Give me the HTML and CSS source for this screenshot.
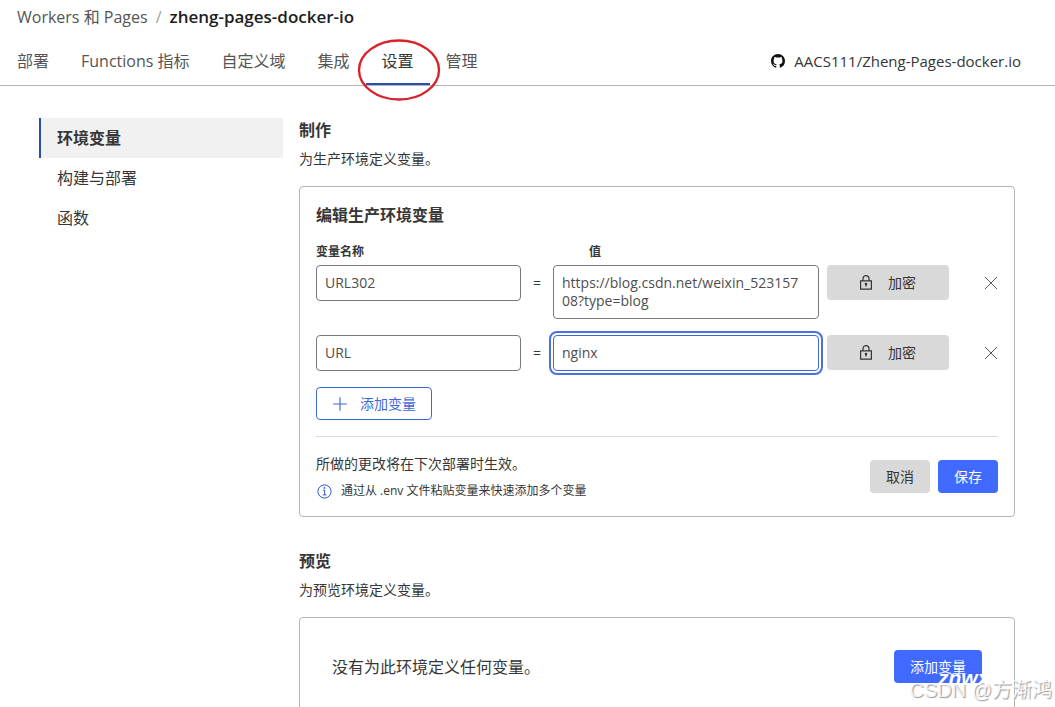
FILE: index.html
```html
<!DOCTYPE html>
<html lang="zh-CN">
<head>
<meta charset="utf-8">
<meta name="viewport" content="width=device-width, initial-scale=1">
<title>zheng-pages-docker-io</title>
<link rel="stylesheet" href="styles.css">
</head>
<body>
<header class="page-header">
  <div class="breadcrumb"><a href="#">Workers 和 Pages</a><span class="slash">/</span><strong>zheng-pages-docker-io</strong></div>
  <div class="header-row">
    <nav class="tabs">
      <a class="tab" href="#">部署</a>
      <a class="tab" href="#">Functions 指标</a>
      <a class="tab" href="#">自定义域</a>
      <a class="tab" href="#">集成</a>
      <a class="tab active" href="#">设置<svg class="circle" viewBox="0 0 84 64" aria-hidden="true"><ellipse cx="42" cy="32" rx="40" ry="29.5"/></svg></a>
      <a class="tab" href="#">管理</a>
    </nav>
    <a class="repo" href="#">
      <svg class="github" viewBox="0 0 16 16" aria-hidden="true"><path d="M8 0C3.58 0 0 3.58 0 8c0 3.54 2.29 6.53 5.47 7.59.4.07.55-.17.55-.38 0-.19-.01-.82-.01-1.49-2.01.37-2.53-.49-2.69-.94-.09-.23-.48-.94-.82-1.13-.28-.15-.68-.52-.01-.53.63-.01 1.08.58 1.23.82.72 1.21 1.87.87 2.33.66.07-.52.28-.87.51-1.07-1.78-.2-3.64-.89-3.64-3.95 0-.87.31-1.59.82-2.15-.08-.2-.36-1.02.08-2.12 0 0 .67-.21 2.2.82a7.6 7.6 0 0 1 4 0c1.53-1.04 2.2-.82 2.2-.82.44 1.1.16 1.92.08 2.12.51.56.82 1.27.82 2.15 0 3.07-1.87 3.75-3.65 3.95.29.25.54.73.54 1.48 0 1.07-.01 1.93-.01 2.2 0 .21.15.46.55.38A8 8 0 0 0 16 8c0-4.42-3.58-8-8-8z"/></svg>
      AACS111/Zheng-Pages-docker.io
    </a>
  </div>
</header>
<div class="layout">
  <nav class="sidebar">
    <a class="side-link current" href="#">环境变量</a>
    <a class="side-link" href="#">构建与部署</a>
    <a class="side-link" href="#">函数</a>
  </nav>
  <main class="content">
    <section class="section">
      <h2>制作</h2>
      <p class="lead">为生产环境定义变量。</p>
      <form class="card editor">
        <h3>编辑生产环境变量</h3>
        <div class="var-row labels"><span id="name-label">变量名称</span><span></span><span id="value-label" class="value-label">值</span></div>
        <div class="var-row">
          <input class="field" type="text" value="URL302" aria-labelledby="name-label">
          <span class="equals">=</span>
          <textarea class="field" rows="2" aria-labelledby="value-label">https://blog.csdn.net/weixin_52315708?type=blog</textarea>
          <button class="btn encrypt" type="button"><svg class="lock" viewBox="0 0 12 15" aria-hidden="true"><path d="M.6 5.9h10.8v8.2H.6zM3 5.9V3.6a3 3 0 0 1 6 0v2.3"/><path d="M6 8.4v3"/><circle cx="6" cy="9" r=".7"/></svg>加密</button>
          <button class="remove" type="button" aria-label="删除"><svg viewBox="0 0 14 14" aria-hidden="true"><path d="M1 1l12 12M13 1L1 13"/></svg></button>
        </div>
        <div class="var-row">
          <input class="field" type="text" value="URL" aria-labelledby="name-label">
          <span class="equals">=</span>
          <textarea class="field focused" rows="1" aria-labelledby="value-label">nginx</textarea>
          <button class="btn encrypt" type="button"><svg class="lock" viewBox="0 0 12 15" aria-hidden="true"><path d="M.6 5.9h10.8v8.2H.6zM3 5.9V3.6a3 3 0 0 1 6 0v2.3"/><path d="M6 8.4v3"/><circle cx="6" cy="9" r=".7"/></svg>加密</button>
          <button class="remove" type="button" aria-label="删除"><svg viewBox="0 0 14 14" aria-hidden="true"><path d="M1 1l12 12M13 1L1 13"/></svg></button>
        </div>
        <button class="btn outline" type="button"><svg class="plus" viewBox="0 0 14 14" aria-hidden="true"><path d="M7 1v12M1 7h12"/></svg>添加变量</button>
        <footer class="card-footer">
          <div>
            <p class="note">所做的更改将在下次部署时生效。</p>
            <p class="hint"><svg class="info" viewBox="0 0 15 15" aria-hidden="true"><circle cx="7.5" cy="7.5" r="6.6"/><path d="M6 6.2h1.7v4.6M5.8 10.9h3.6"/><circle class="dot" cx="7.5" cy="3.9" r=".9"/></svg>通过从 .env 文件粘贴变量来快速添加多个变量</p>
          </div>
          <div class="actions">
            <button class="btn" type="button">取消</button>
            <button class="btn primary" type="submit">保存</button>
          </div>
        </footer>
      </form>
    </section>
    <section class="section">
      <h2>预览</h2>
      <p class="lead">为预览环境定义变量。</p>
      <div class="card empty">
        <p>没有为此环境定义任何变量。</p>
        <button class="btn primary" type="button">添加变量</button>
      </div>
    </section>
  </main>
</div>
<div class="watermark">CSDN @方渐鸿</div>
<div class="watermark-site">znwx</div>
</body>
</html>
```
FILE: styles.css
```css
* { box-sizing: border-box; }
html { height: 100%; overflow: hidden; }
body {
  margin: 0;
  height: 100%;
  overflow: hidden;
  position: relative;
  background: #fff;
  color: #363636;
  font: 16px/24px "Open Sans", "Noto Sans CJK SC", sans-serif;
}
a { color: inherit; text-decoration: none; }
h2, h3, p { margin: 0; }
h2, h3 { font-size: 16px; line-height: 24px; font-weight: 600; }
svg { fill: none; stroke: currentColor; flex: none; }

.page-header { border-bottom: 1px solid #b5b5b5; }
.breadcrumb { display: flex; align-items: center; padding: 5px 17px 0; color: #555; }
.breadcrumb strong { color: #1d1d1d; font-size: 17px; font-weight: 600; }
.slash { margin: 0 8px; color: #a0a0a0; }
.header-row { display: flex; justify-content: space-between; align-items: center; padding: 0 34px 0 1px; height: 56px; }
.tabs { display: flex; height: 56px; }
.tab { position: relative; padding: 20px 16px 0; color: #555; white-space: nowrap; }
.tab.active { color: #363636; box-shadow: inset 0 -2px #2c4cb4; }
.circle { position: absolute; left: -9px; top: 9px; width: 84px; height: 64px; stroke: #d8232a; stroke-width: 2.4; z-index: 1; }
.repo { display: flex; align-items: center; gap: 9px; padding-top: 8px; font-size: 15px; }
.github { width: 14px; height: 14px; fill: #111; stroke: none; }

.layout { display: grid; grid-template-columns: 244px 1fr; gap: 16px; padding: 32px 40px 0 39px; }
.side-link { display: block; padding: 8px 18px; }
.side-link.current { padding-left: 16px; border-left: 2px solid #2c4cb4; background: #f1f1f1; font-weight: 600; }
.section { margin-bottom: 32px; }
.lead { margin: 6px 0 16px; font-size: 14px; line-height: 22px; }
.card { border: 1px solid #b5b5b5; border-radius: 4px; }
.editor { padding: 16px 16px 15px; }
.var-row { display: grid; grid-template-columns: 205px 16px minmax(0, 1fr) 122px 41px; gap: 8px; align-items: start; margin-bottom: 16px; }
.labels { margin: 17px 0 5px; font-size: 12px; line-height: 16px; font-weight: 600; }
.value-label { padding-left: 36px; }
.field {
  display: block;
  width: 100%;
  padding: 8px 14px 8px 8px;
  border: 1px solid #797979;
  border-radius: 4px;
  background: #fff;
  color: #4e4e4e;
  font: 14px/18px "Open Sans", "Noto Sans CJK SC", sans-serif;
  resize: none;
  overflow: hidden;
  word-break: break-all;
}
.focused { border-color: #3f68d8; outline: 2px solid #4a70dc; outline-offset: 2px; }
.equals { font-size: 14px; line-height: 36px; text-align: center; }
.btn {
  display: inline-flex;
  align-items: center;
  justify-content: center;
  height: 33px;
  padding: 0 16px;
  border: 0;
  border-radius: 4px;
  background: #d9d9d9;
  color: #363636;
  font: 14px/20px "Open Sans", "Noto Sans CJK SC", sans-serif;
}
.encrypt { height: 35px; gap: 16px; }
.lock { width: 12px; height: 15px; stroke-width: 1.2; }
.remove { display: flex; align-items: center; justify-content: flex-end; height: 35px; padding: 0; border: 0; background: none; color: #595959; }
.remove svg { width: 14px; height: 14px; }
.outline { border: 1px solid #3f68d8; background: #fff; color: #3f68d8; gap: 12px; padding: 0 15px; }
.plus { width: 16px; height: 16px; }
.primary { background: #4069ff; color: #fff; }
.card-footer { display: flex; justify-content: space-between; align-items: center; margin-top: 16px; padding-top: 15px; border-top: 1px solid #d9d9d9; }
.note { font-size: 14px; line-height: 24px; }
.hint { display: flex; align-items: center; gap: 9px; margin-top: 5px; font-size: 12px; line-height: 20px; }
.info { width: 15px; height: 15px; margin-left: 1px; color: #2c5bc4; }
.info .dot { fill: currentColor; stroke: none; }
.actions { display: flex; gap: 8px; }
.empty { display: flex; align-items: center; justify-content: space-between; padding: 32px; }
.watermark { position: absolute; right: 3px; bottom: 2px; color: #ffffffcc; font: 20px/30px "Liberation Sans", "Noto Sans CJK SC", sans-serif; text-shadow: 1px 1px 1px #999; }
.watermark-site { position: absolute; left: 938px; top: 666px; color: #fff; font: italic 700 21px/24px "Liberation Sans", sans-serif; }
```
